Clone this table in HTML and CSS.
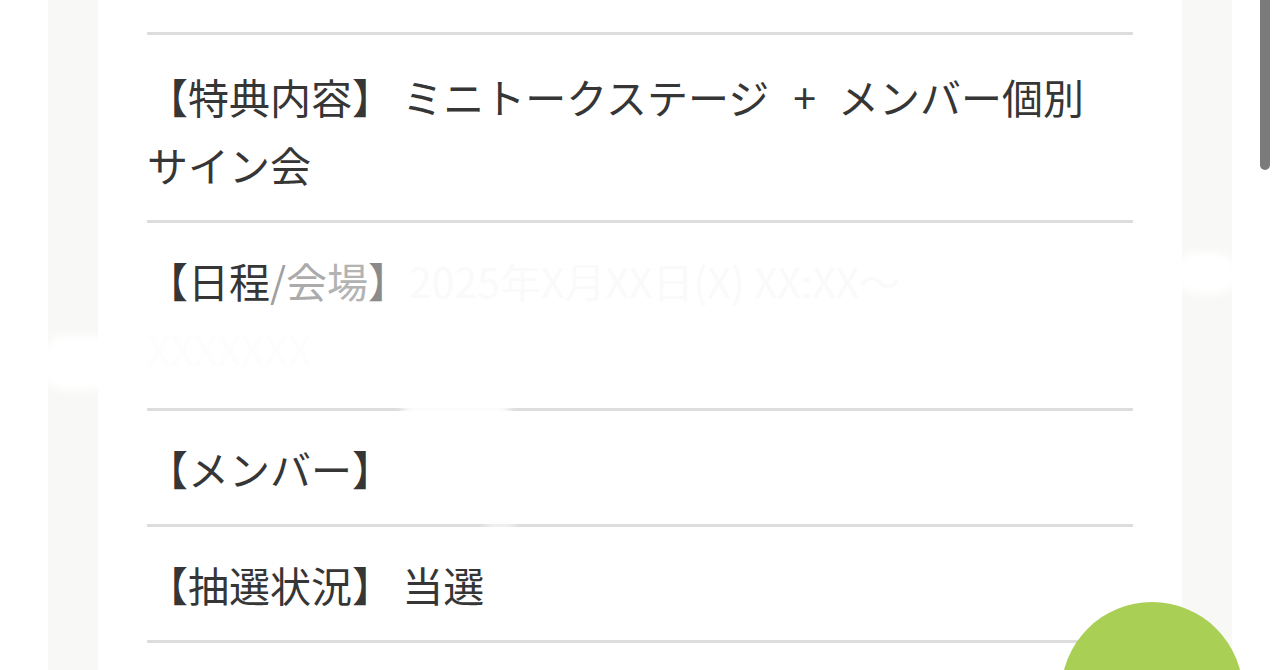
FILE: index.html
```html
<!DOCTYPE html>
<html lang="ja">
<head>
<meta charset="utf-8">
<title>当選詳細</title>
<link rel="stylesheet" href="styles.css">
</head>
<body>
<div class="page">
  <div class="column">
    <div class="card">
      <ul class="info-list">
        <li class="info-row row-first">【特典内容】 ミニトークステージ<span class="plus">+</span>メンバー個別サイン会</li>
        <li class="info-row row-schedule"><span class="dark">【日程</span><span class="fade1">/</span><span class="fade2">会</span><span class="fade3">場</span><span class="fade4">】</span><span class="ghost">2025年X月XX日(X) XX:XX〜</span><br><span class="ghost ghost-light">XXXXXXX</span></li>
        <li class="info-row">【メンバー】</li>
        <li class="info-row">【抽選状況】 当選</li>
      </ul>
    </div>
  </div>
</div>
<div class="smear smear-left"></div>
<div class="smear smear-right"></div>
<div class="smear smear-gap1"></div>
<div class="smear smear-gap2"></div>
<div class="scrollbar"></div>
<div class="fab"></div>
</body>
</html>
```

FILE: styles.css
```css
html, body {
  margin: 0;
  padding: 0;
  height: 670px;
  overflow: hidden;
  background: #ffffff;
}

body {
  font-family: "Noto Sans CJK JP", "Noto Sans", sans-serif;
  color: #363636;
}

.page {
  padding: 0 48px;
  height: 670px;
}

.column {
  background: #f8f8f6;
  padding: 0 50px;
  height: 670px;
}

.card {
  background: #ffffff;
  padding: 32px 49px 0;
  height: 638px;
}

.info-list {
  list-style: none;
  margin: 0;
  padding: 0;
  border-bottom: 3px solid #dddddd;
}

.info-row {
  border-top: 3px solid #dddddd;
  padding: 23px 20px 22px 0;
  font-size: 41px;
  line-height: 68px;
  letter-spacing: 0;
}

.plus {
  margin: 0 22px 0 24px;
}

.row-first {
  padding-top: 27px;
}

.row-schedule {
  padding-bottom: 26px;
}

.dark { color: #363636; }
.fade1 { color: #a0a0a0; }
.fade2 { color: #ababab; }
.fade3 { color: #b3b3b3; }
.fade4 { color: #8a8a8a; }
.ghost { color: #fafafa; }
.ghost-light { color: #fdfdfd; }

.smear {
  position: absolute;
  background: #ffffff;
  filter: blur(4px);
  border-radius: 20px;
}

.smear-left {
  left: 44px;
  top: 335px;
  width: 70px;
  height: 55px;
}

.smear-right {
  left: 1176px;
  top: 252px;
  width: 60px;
  height: 42px;
}

.smear-gap1 {
  left: 402px;
  top: 403px;
  width: 108px;
  height: 14px;
}

.smear-gap2 {
  left: 485px;
  top: 521px;
  width: 30px;
  height: 10px;
  opacity: 0.7;
}

.scrollbar {
  position: absolute;
  left: 1260px;
  top: -10px;
  width: 10px;
  height: 180px;
  border-radius: 5px;
  background: #7b7b7b;
}

.fab {
  position: absolute;
  left: 1061px;
  top: 602px;
  width: 182px;
  height: 182px;
  border-radius: 50%;
  background: #aacf55;
}
```
